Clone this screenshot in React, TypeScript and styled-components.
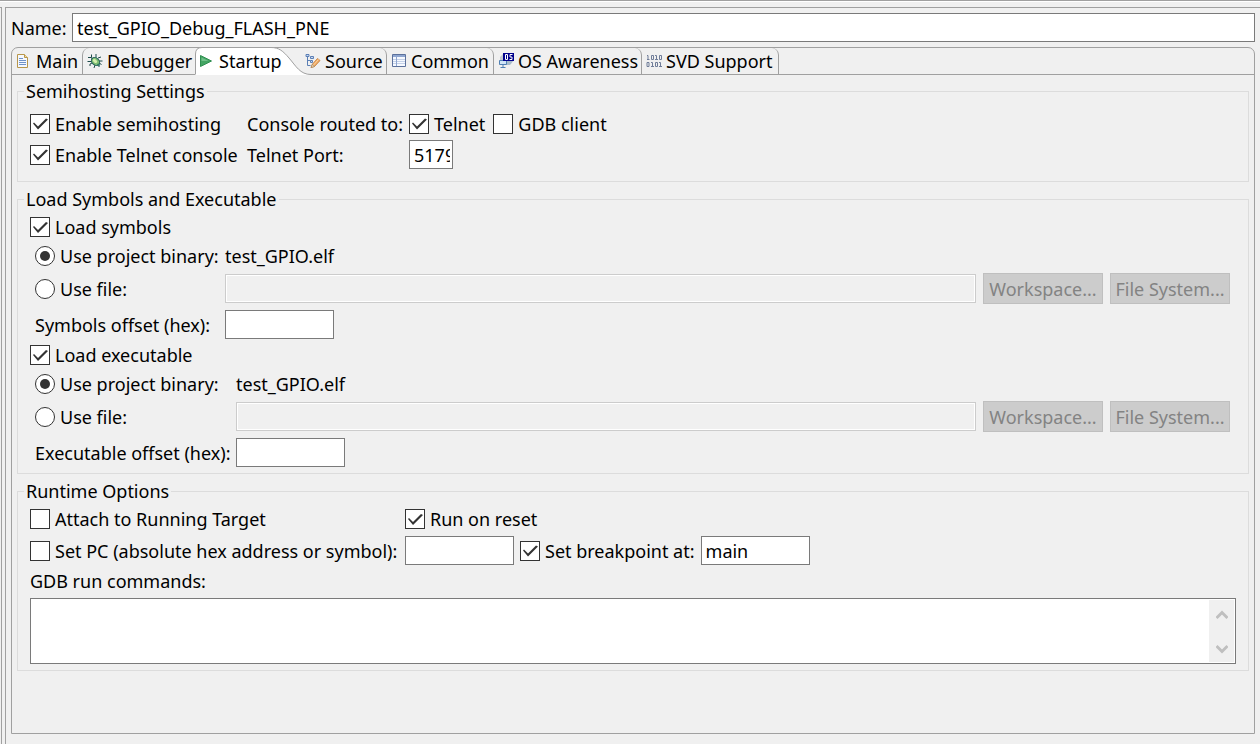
import React, { useState } from 'react';
import type { ReactNode } from 'react';
import styled, { createGlobalStyle, css } from 'styled-components';

const face = '#f0f0f0';
const line = '#a0a0a0';
const groupLine = '#dcdcdc';
const fieldLine = '#7a7a7a';

const GlobalStyle = createGlobalStyle`
  *, *::before, *::after { box-sizing: border-box; }
  body {
    margin: 0;
    background: ${face};
    color: #000;
    font: 18px/22px "Noto Sans", "Segoe UI", sans-serif;
  }
  input, button, textarea { font: inherit; color: inherit; margin: 0; border-radius: 0; }
`;

/* ---------- window frame ---------- */

const Shell = styled.div`
  display: flex;
  min-height: 100vh;
  border-top: 1px solid ${line};
  box-shadow: inset 0 1px 0 #fff;
  padding-top: 6px;
`;

const SidePane = styled.div`
  flex: none;
  width: 2px;
  margin-right: 3px;
  border-right: 1px solid ${line};
  border-top: 1px solid ${line};
`;

const Editor = styled.main`
  flex: 1;
  min-width: 0;
  display: flex;
  flex-direction: column;
  gap: 5px;
  padding: 5px 5px 10px;
  border-top: 1px solid ${line};
  border-left: 1px solid ${line};
`;

const NameRow = styled.div`
  display: flex;
  align-items: center;
  gap: 5px;
`;

const NameLabel = styled.label`
  width: 56px;
`;

const TextField = styled.input<{ $width?: number }>`
  ${p => (p.$width ? css`width: ${p.$width}px;` : css`flex: 1; width: 100%;`)}
  min-width: 0;
  height: 29px;
  padding: 0 2px 0 4px;
  border: 1px solid ${fieldLine};
  background: #fff;
  outline: none;
  &:disabled {
    background: ${face};
    border-color: #cccccc;
    box-shadow: inset 0 0 0 1px #fff;
  }
`;

/* ---------- tabs ---------- */

const Folder = styled.section`
  flex: 1;
  display: flex;
  flex-direction: column;
  border: 1px solid ${line};
  border-radius: 7px 7px 0 0;
`;

const TabBar = styled.div`
  display: flex;
  height: 27px;
  border-bottom: 1px solid ${line};
`;

type TabSide = 'first' | 'left' | 'active' | 'right';

const TabButton = styled.button<{ $width: number; $side: TabSide }>`
  position: relative;
  display: flex;
  align-items: center;
  gap: 4px;
  width: ${p => p.$width}px;
  height: 26px;
  padding: 0 0 0 4px;
  border: 0;
  background: none;
  white-space: nowrap;
  text-align: left;
  ${p => p.$side === 'right' && css`
    border-right: 1px solid ${line};
    border-top-right-radius: 7px;
  `}
  ${p => p.$side === 'left' && css`
    border-left: 1px solid ${line};
    border-top-left-radius: 7px;
  `}
  ${p => p.$side === 'active' && css`
    z-index: 1;
  `}
  svg { flex: none; }
`;

const TabCurve = styled.svg`
  position: absolute;
  left: 0;
  top: -1px;
  z-index: -1;
`;

const TabPanel = styled.div`
  flex: 1;
  display: flex;
  flex-direction: column;
  gap: 5px;
  padding: 4px 5px;
`;

/* ---------- groups and rows ---------- */

const Group = styled.fieldset<{ $gap: number; $bottom: number }>`
  display: flex;
  flex-direction: column;
  gap: ${p => p.$gap}px;
  min-width: 0;
  margin: 0;
  padding: 5px 12px ${p => p.$bottom}px;
  border: 1px solid ${groupLine};
`;

const GroupTitle = styled.legend`
  height: 24px;
  margin-left: -6px;
  padding: 0 2px;
  line-height: 24px;
`;

const SemihostGrid = styled.div`
  display: grid;
  grid-template-columns: 212px 157px 1fr;
  grid-auto-rows: 31px;
  column-gap: 5px;
  align-items: center;
`;

const Section = styled.div`
  display: flex;
  flex-direction: column;
  gap: 6px;
  padding-right: 6px;
`;

const BinaryGrid = styled.div<{ $label: number }>`
  display: grid;
  grid-template-columns: ${p => p.$label}px minmax(0, 1fr);
  grid-template-rows: 23px auto auto;
  gap: 6px 5px;
  align-items: center;
  padding-left: 5px;
`;

const RuntimeGrid = styled.div`
  display: grid;
  grid-template-columns: 370px 1fr;
  gap: 6px 5px;
  align-items: center;
`;

const Row = styled.div<{ $gap: number }>`
  display: flex;
  align-items: center;
  gap: ${p => p.$gap}px;
  white-space: nowrap;
`;

const PushButton = styled.button`
  flex: none;
  width: 120px;
  height: 31px;
  padding: 0;
  border: 1px solid #bfbfbf;
  background: #cccccc;
  &:disabled { color: #838383; }
`;

const Choice = styled.label`
  display: flex;
  align-items: center;
  gap: 5px;
  white-space: nowrap;
`;

const CheckInput = styled.input`
  appearance: none;
  flex: none;
  width: 20px;
  height: 20px;
  border: 1px solid #333;
  background: #fff;
  &:checked::before {
    content: '';
    display: block;
    width: 18px;
    height: 18px;
    background: #333;
    clip-path: polygon(2px 9px, 3px 8px, 7px 12px, 15px 4px, 17px 5px, 7px 15px);
  }
`;

const RadioInput = styled.input`
  appearance: none;
  flex: none;
  display: grid;
  place-items: center;
  width: 20px;
  height: 20px;
  border: 1px solid #333;
  border-radius: 50%;
  background: #fff;
  &:checked::before {
    content: '';
    width: 10px;
    height: 10px;
    border-radius: 50%;
    background: #333;
  }
`;

const Commands = styled.div`
  display: flex;
  flex-direction: column;
  gap: 6px;
`;

const CommandBox = styled.div`
  display: flex;
  height: 66px;
  padding: 1px;
  border: 1px solid ${fieldLine};
  background: #fff;
`;

const CommandText = styled.textarea`
  flex: 1;
  min-width: 0;
  padding: 2px;
  border: 0;
  outline: none;
  resize: none;
  overflow: hidden;
`;

const ScrollTrack = styled.div`
  display: flex;
  flex-direction: column;
  justify-content: space-between;
  align-items: center;
  width: 25px;
  padding: 10px 0 8px;
  background: ${face};
`;

/* ---------- icons ---------- */

const Icon = ({ children }: { children: ReactNode }) => (
  <svg width="16" height="16" viewBox="0 0 16 16" aria-hidden="true">{children}</svg>
);

const PageIcon = () => (
  <Icon>
    <path d="M1.500 1.500h7l3 3v10h-10z" fill="#f4f8ff" stroke="#b8964a" />
    <path d="M8.500 1.500v3h3" fill="#f3dc9c" stroke="#b8964a" />
    <path d="M3 5.500h4M3 7.500h7M3 9.500h7M3 11.500h7" stroke="#6f92c8" />
  </Icon>
);

const BugIcon = () => (
  <Icon>
    <path d="M4.500 1.500v3l2 2M9 1v4M1 4.500h3l2 2M0.500 8.500h4M3 13v-2l2-1M7 15l1-3M12 14v-2M11 5l3-1M12 8h3.500M12 10l2.500 1.500" fill="none" stroke="#1d4a4a" />
    <ellipse cx="8.500" cy="8.500" rx="4.500" ry="3.500" transform="rotate(40 8.500 8.500)" fill="#7fbf73" stroke="#205c58" />
    <ellipse cx="8" cy="8" rx="2.500" ry="1.500" transform="rotate(40 8 8)" fill="#d7efb0" />
    <path d="M11 10.500l2 1-1 1.500-2-1z" fill="#2f7a68" />
  </Icon>
);

const PlayIcon = () => (
  <Icon>
    <path d="M1.500 2.500v11L12.500 8z" fill="#43a563" stroke="#2f8f50" strokeLinejoin="round" />
    <path d="M2.500 4.500v3.500h7z" fill="#72c08a" />
  </Icon>
);

const SourceIcon = () => (
  <Icon>
    <path d="M2.500 3v9.500h3M2.500 7.500h3" fill="none" stroke="#5b7fb5" />
    <path d="M1 1.500h3v2H1zM5.500 3.500h3v2h-3zM5.500 7.500h2v2h-2z" fill="#c9d9f2" stroke="#5b7fb5" />
    <path d="M6 14.500l1.500-3.500 5-5.500 2.500 2-5.500 6z" fill="#f0a860" stroke="#c98a4e" />
    <path d="M6 14.500l1.500-3.500 2 2.500z" fill="#ecd9b8" stroke="#9a7a55" strokeWidth=".6" />
    <path d="M8.500 12l5-5.500" stroke="#fbd5a5" />
  </Icon>
);

const TableIcon = () => (
  <Icon>
    <path d="M1.500 1.500h13v12h-13z" fill="#f6f9ff" stroke="#5c719c" />
    <path d="M2 2h12v2H2z" fill="#8fa6d0" />
    <path d="M2 6.500h12M2 8.500h12M2 10.500h12" stroke="#c4d1e8" />
    <path d="M5.500 4v9" stroke="#8fa6d0" />
  </Icon>
);

const OsIcon = () => (
  <Icon>
    <path d="M2 4L6 0v10l-4 2z" fill="#c2c8ce" />
    <path d="M5 7h11l-4 5H5z" fill="#a9bccb" />
    <path d="M1.500 7.500h7v4h-7z" fill="#cfe4f7" stroke="#4f7fb3" />
    <path d="M5 12v2M2.500 14.500h5" stroke="#4f7fb3" />
    <path d="M5 0h11v8H5z" fill="#00008b" />
    <path d="M7.500 1.500h2v5h-2zM14.500 1.500H12v2.500h2v2.500h-2.500" fill="none" stroke="#fff" />
  </Icon>
);

const BinaryIcon = () => (
  <Icon>
    <path
      d="M1 2.500h1v4M1 6.500h2.500M5.500 2.500h2v4h-2zM9 2.500h1.500v4M9 6.500h3M13.500 2.500h2v4h-2zM1 9.500h2v4H1zM5 9.500h1.500v4M5 13.500h3M9.500 9.500h2v4h-2zM13 9.500h1.500v4M13 13.500h3"
      fill="none"
      stroke="#6f7c98"
    />
  </Icon>
);

const Arrow = ({ down }: { down?: boolean }) => (
  <svg width="12" height="10" viewBox="0 0 12 10" aria-hidden="true">
    <path d={down ? 'M.500 2L6 7.500 11.500 2' : 'M.500 8L6 2.500 11.500 8'} fill="none" stroke="#bfbfbf" strokeWidth="3" />
  </svg>
);

/* ---------- parts ---------- */

const Check = ({ label, on }: { label: string; on?: boolean }) => (
  <Choice>
    <CheckInput type="checkbox" defaultChecked={on} />
    {label}
  </Choice>
);

const Radio = ({ label, name, on }: { label: string; name: string; on?: boolean }) => (
  <Choice>
    <RadioInput type="radio" name={name} defaultChecked={on} />
    {label}
  </Choice>
);

const tabs = [
  { label: 'Main', width: 70, icon: <PageIcon /> },
  { label: 'Debugger', width: 113, icon: <BugIcon /> },
  { label: 'Startup', width: 106, icon: <PlayIcon /> },
  { label: 'Source', width: 86, icon: <SourceIcon /> },
  { label: 'Common', width: 107, icon: <TableIcon /> },
  { label: 'OS Awareness', width: 148, icon: <OsIcon /> },
  { label: 'SVD Support', width: 137, icon: <BinaryIcon /> },
];

const sideOf = (index: number, active: number): TabSide => {
  if (index === active) return 'active';
  if (index > active) return 'right';
  return index === 0 ? 'first' : 'left';
};

interface BinaryProps {
  id: string;
  title: string;
  offsetLabel: string;
  labelWidth: number;
}

const BinarySection = ({ id, title, offsetLabel, labelWidth }: BinaryProps) => (
  <Section>
    <Check label={title} on />
    <BinaryGrid $label={labelWidth}>
      <Radio name={id} label="Use project binary:" on />
      <span>test_GPIO.elf</span>
      <Radio name={id} label="Use file:" />
      <Row $gap={7}>
        <TextField disabled aria-label={`${title} file`} />
        <PushButton disabled>Workspace...</PushButton>
        <PushButton disabled>File System...</PushButton>
      </Row>
      <label htmlFor={`${id}-offset`}>{offsetLabel}</label>
      <TextField id={`${id}-offset`} $width={109} />
    </BinaryGrid>
  </Section>
);

export default function App() {
  const [active, setActive] = useState(2);
  return (
    <>
      <GlobalStyle />
      <Shell>
        <SidePane />
        <Editor>
          <NameRow>
            <NameLabel htmlFor="name">Name:</NameLabel>
            <TextField id="name" defaultValue="test_GPIO_Debug_FLASH_PNE" />
          </NameRow>
          <Folder>
            <TabBar role="tablist">
              {tabs.map((tab, i) => (
                <TabButton
                  key={tab.label}
                  role="tab"
                  aria-selected={i === active}
                  $width={tab.width}
                  $side={sideOf(i, active)}
                  onClick={() => setActive(i)}
                >
                  {i === active && (
                    <TabCurve width="118" height="28" viewBox="0 0 118 28" aria-hidden="true">
                      <path
                        d="M0 28V7Q.500 .500 7 .500H76C84 .500 88 4 94 11C101 19 105 27.500 116 27.500V28z"
                        fill="#fff"
                      />
                      <path
                        d="M.500 27.500V7Q.500 .500 7 .500H76C84 .500 88 4 94 11C101 19 105 27.500 116 27.500"
                        fill="none"
                        stroke={line}
                      />
                    </TabCurve>
                  )}
                  {tab.icon}
                  {tab.label}
                </TabButton>
              ))}
            </TabBar>
            <TabPanel role="tabpanel">
              <Group $gap={0} $bottom={11}>
                <GroupTitle>Semihosting Settings</GroupTitle>
                <SemihostGrid>
                  <Check label="Enable semihosting" on />
                  <span>Console routed to:</span>
                  <Row $gap={8}>
                    <Check label="Telnet" on />
                    <Check label="GDB client" />
                  </Row>
                  <Check label="Enable Telnet console" on />
                  <label htmlFor="port">Telnet Port:</label>
                  <TextField id="port" $width={44} defaultValue="5179" />
                </SemihostGrid>
              </Group>
              <Group $gap={5} $bottom={6}>
                <GroupTitle>Load Symbols and Executable</GroupTitle>
                <BinarySection
                  id="symbols"
                  title="Load symbols"
                  offsetLabel="Symbols offset (hex):"
                  labelWidth={185}
                />
                <BinarySection
                  id="executable"
                  title="Load executable"
                  offsetLabel="Executable offset (hex):"
                  labelWidth={196}
                />
              </Group>
              <Group $gap={5} $bottom={6}>
                <GroupTitle>Runtime Options</GroupTitle>
                <RuntimeGrid>
                  <Check label="Attach to Running Target" />
                  <Check label="Run on reset" on />
                  <Check label="Set PC (absolute hex address or symbol):" />
                  <Row $gap={6}>
                    <TextField $width={109} aria-label="PC address" />
                    <Check label="Set breakpoint at:" on />
                    <TextField $width={109} aria-label="Breakpoint" defaultValue="main" />
                  </Row>
                </RuntimeGrid>
                <Commands>
                  <label htmlFor="commands">GDB run commands:</label>
                  <CommandBox>
                    <CommandText id="commands" />
                    <ScrollTrack>
                      <Arrow />
                      <Arrow down />
                    </ScrollTrack>
                  </CommandBox>
                </Commands>
              </Group>
            </TabPanel>
          </Folder>
        </Editor>
      </Shell>
    </>
  );
}
